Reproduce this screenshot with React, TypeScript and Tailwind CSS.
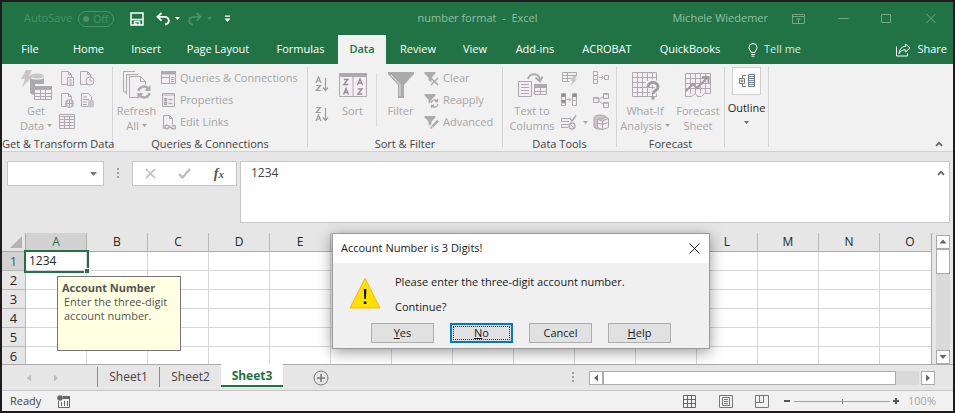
import type { ReactNode } from 'react'

const TABS = [
  { label: 'File', width: 'w-[56px]' },
  { label: 'Home', width: 'w-[61px]' },
  { label: 'Insert', width: 'w-[54px]' },
  { label: 'Page Layout', width: 'w-[90px]' },
  { label: 'Formulas', width: 'w-[75px]' },
  { label: 'Data', width: 'w-[48px]' },
  { label: 'Review', width: 'w-[64px]' },
  { label: 'View', width: 'w-[50px]' },
  { label: 'Add-ins', width: 'w-[70px]' },
  { label: 'ACROBAT', width: 'w-[74px]' },
  { label: 'QuickBooks', width: 'w-[92px]' },
]

const COLUMNS = 'ABCDEFGHIJKLMNO'.split('')
const ROWS = [1, 2, 3, 4, 5, 6]

export default function App() {
  return (
    <div className="relative flex flex-col h-screen overflow-hidden border-2 border-[#1f1a1e] bg-[#e6e6e6] font-['Open_Sans','Noto_Sans',sans-serif] text-[11px] text-[#444]">
      <TitleBar />
      <RibbonTabs />
      <Ribbon />
      <FormulaBar />
      <Sheet />
      <SheetTabs />
      <StatusBar />
      <AlertDialog />
    </div>
  )
}

function TitleBar() {
  return (
    <header className="grid grid-cols-[1fr_auto_1fr] items-center h-[33px] shrink-0 bg-[#217346] text-[#8fc0a3]">
      <div className="flex items-center pl-[22px]">
        <label htmlFor="autosave" className="w-[54px] text-[#4b916a]">
          AutoSave
        </label>
        <button
          id="autosave"
          className="flex items-center justify-between w-9 h-4 pl-1 pr-[5px] rounded-full border border-[#4b916a] text-[10px] leading-none text-[#4b916a]"
        >
          <span className="w-[6px] h-[6px] rounded-full bg-[#4b916a]" />
          Off
        </button>
        <button aria-label="Save" className="ml-4">
          <svg width="14" height="14" viewBox="0 0 14 14" fill="none" stroke="#fff" strokeWidth="1.5">
            <path d="M1 1h12v12H1zM4.500 13V9.500h5V13" />
            <path d="M1 7.500h12M6 11v2" />
          </svg>
        </button>
        <button aria-label="Undo" className="ml-3">
          <UndoIcon color="#fff" />
        </button>
        <Caret className="ml-[5px] text-white" />
        <button aria-label="Redo" className="ml-2 -scale-x-100">
          <UndoIcon color="#4b916a" />
        </button>
        <Caret className="ml-[5px] text-[#4b916a]" />
        <button aria-label="Customize Quick Access Toolbar" className="ml-3">
          <svg width="7" height="8" viewBox="0 0 7 8" fill="#fff">
            <path d="M1 0.500h5v1.200H1zM0.500 3.500h6L3.500 7z" />
          </svg>
        </button>
      </div>
      <h1 className="whitespace-pre">number format  -  Excel</h1>
      <div className="flex items-center justify-end pr-[17px]">
        <span className="mr-6">Michele Wiedemer</span>
        <button aria-label="Ribbon display options" className="mr-8">
          <svg width="14" height="12" viewBox="0 0 14 12" fill="none" stroke="#6fa988">
            <path d="M0.500 1.500h12v9h-12zM0.500 3.500h12M6.500 10V5.500M4.500 7l2-2 2 2" />
          </svg>
        </button>
        <button aria-label="Minimize" className="mr-8">
          <svg width="11" height="11" viewBox="0 0 11 11" stroke="#6fa988">
            <path d="M0.500 5.500h10" />
          </svg>
        </button>
        <button aria-label="Maximize" className="mr-[34px]">
          <svg width="11" height="11" viewBox="0 0 11 11" fill="none" stroke="#6fa988">
            <path d="M0.500 1.500h9v8h-9z" />
          </svg>
        </button>
        <button aria-label="Close">
          <svg width="10" height="11" viewBox="0 0 10 11" stroke="#6fa988">
            <path d="M0.500 1l9 9M9.500 1l-9 9" />
          </svg>
        </button>
      </div>
    </header>
  )
}

function UndoIcon({ color }: { color: string }) {
  return (
    <svg width="14" height="14" viewBox="0 0 14 14" fill="none" stroke={color} strokeWidth="1.8">
      <path d="M5.500 1L1.500 4.800l4 3.900M1.800 4.800H8c3.400 0 4.800 1.800 4.800 3.900 0 1.900-1.500 3.300-3.800 3.800" />
    </svg>
  )
}

function Caret({ className = '' }: { className?: string }) {
  return (
    <svg width="5" height="3" viewBox="0 0 5 3" className={className}>
      <path d="M0 0h5L2.500 3z" fill="currentColor" />
    </svg>
  )
}

function RibbonTabs() {
  return (
    <nav className="flex h-[29px] shrink-0 bg-[#217346] text-white">
      {TABS.map((tab) => (
        <button
          key={tab.label}
          className={`${tab.width} h-full whitespace-nowrap ${
            tab.label === 'Data' ? 'bg-[#f1f1f1] font-semibold text-[#217346]' : ''
          }`}
        >
          {tab.label}
        </button>
      ))}
      <button className="flex items-center gap-[6px] ml-3 text-[#d8eadf]">
        <svg width="10" height="14" viewBox="0 0 10 14" fill="none" stroke="#fff">
          <path d="M3 9.500C3 7.500 1 7 1 4.500a4 4 0 0 1 8 0C9 7 7 7.500 7 9.500zM3 11.500h4M3.500 13.200h3" />
        </svg>
        Tell me
      </button>
      <button className="flex items-center gap-[6px] ml-auto pr-[6px]">
        <svg width="15" height="14" viewBox="0 0 15 14" fill="none" stroke="#fff">
          <path d="M0.500 3.500v9.500h11V10" />
          <path d="M9.500 1l4.500 4-4.500 4V6.800C6.500 6.800 4.500 8 3 10.500 3.500 6 6 3.500 9.500 3.200z" />
        </svg>
        Share
      </button>
    </nav>
  )
}

function Group({ label, width, children }: { label: string; width: string; children: ReactNode }) {
  return (
    <section className={`${width} flex flex-col h-[80px] border-r border-[#d4d4d4]`}>
      <div className="flex h-[66px] text-[#a6a6a6]">{children}</div>
      <h2 className="mt-[3px] leading-4 text-center whitespace-nowrap">{label}</h2>
    </section>
  )
}

function BigButton({
  icon,
  lines,
  width,
  caret = false,
}: {
  icon: ReactNode
  lines: string[]
  width: string
  caret?: boolean
}) {
  return (
    <button className={`${width} flex flex-col items-center shrink-0 leading-[15px] whitespace-nowrap`}>
      <span className="flex items-center justify-center h-9">{icon}</span>
      {lines.map((line, i) => (
        <span key={line} className="flex items-center gap-[3px]">
          {line}
          {caret && i === lines.length - 1 && <Caret />}
        </span>
      ))}
    </button>
  )
}

function SmallButton({ icon, label }: { icon: ReactNode; label: string }) {
  return (
    <button className="flex items-center gap-1 h-[22px] whitespace-nowrap">
      {icon}
      {label}
    </button>
  )
}

function Icon({ w, h, children }: { w: number; h: number; children: ReactNode }) {
  return (
    <svg width={w} height={h} viewBox={`0 0 ${w} ${h}`} fill="#f4eef4" stroke="#adaaad" className="shrink-0">
      {children}
    </svg>
  )
}

function IconButton({ name, children }: { name: string; children: ReactNode }) {
  return (
    <button aria-label={name} className="flex items-center justify-center h-[22px]">
      {children}
    </button>
  )
}

function FunnelIcon({ children }: { children: ReactNode }) {
  return (
    <Icon w={15} h={15}>
      <path d="M0.500 1h11v1.500l-4 4V11l-3-1.500v-3l-4-4z" fill="#adaaad" stroke="none" />
      {children}
    </Icon>
  )
}

// letter strokes for the sort arrows and the Sort button, on a 5x6 box
const LETTER_A = 'M0 6L2.500 0L5 6M1 4h3'
const LETTER_Z = 'M0.300 0.500H4.500L0.300 5.500H4.800'

function SortArrow({ descending = false }: { descending?: boolean }) {
  return (
    <svg width="14" height="17" viewBox="0 0 14 17" fill="none" stroke="#9a9a9a" strokeWidth="1.200">
      <path d={descending ? LETTER_Z : LETTER_A} transform="translate(1 1)" />
      <path d={descending ? LETTER_A : LETTER_Z} transform="translate(1 9)" />
      <path d="M10.500 2v12M8 11.500l2.500 3 2.500-3" />
    </svg>
  )
}

function Ribbon() {
  return (
    <div className="flex items-start h-[88px] shrink-0 pt-[3px] border-b border-[#d0d0d0] bg-[#f1f1f1]">
      <Group label="Get & Transform Data" width="w-[111px]">
        <BigButton
          width="w-[44px] ml-3"
          lines={['Get', 'Data']}
          caret
          icon={
            <Icon w={32} h={32}>
              <path d="M6 1h6L9 7h4L2 18l3-8H1z" fill="#c9c5c9" stroke="none" />
              <ellipse cx="17" cy="7" rx="7" ry="2.500" fill="#c9c5c9" stroke="none" />
              <path d="M10 9c3 2 11 2 14 0v6H15v11c-2 0-5-1-5-3z" fill="#adaaad" stroke="none" />
              <path d="M14.500 17.500h17v13h-17z" />
              <path d="M14 17h18v4H14z" fill="#adaaad" stroke="none" />
              <path d="M14.500 24.500h17M14.500 27.500h17M20.500 21v10M25.500 21v10" />
            </Icon>
          }
        />
        <div className="grid grid-cols-[18px_22px] h-[66px]">
          <IconButton name="From Text/CSV">
            <Icon w={14} h={15}>
              <path d="M1.500 0.500h7l3 3v10h-10zM8.500 0.500v3h3" />
              <path d="M7.500 6.500h6v8h-6zM9 9h3M9 11h3M9 13h3" />
            </Icon>
          </IconButton>
          <IconButton name="Recent Sources">
            <Icon w={16} h={15}>
              <path d="M1.500 0.500h7l3 3v10h-10zM8.500 0.500v3h3" />
              <circle cx="11" cy="10" r="4" />
              <path d="M11 7.500V10h2.500" />
            </Icon>
          </IconButton>
          <IconButton name="From Web">
            <Icon w={14} h={15}>
              <path d="M1.500 0.500h7l3 3v10h-10zM8.500 0.500v3h3" />
              <circle cx="9.500" cy="10.500" r="4" />
              <path d="M5.500 10.500h8M9.500 6.500v8M7.500 7.500c-1 2-1 4 0 6M11.500 7.500c1 2 1 4 0 6" />
            </Icon>
          </IconButton>
          <IconButton name="Existing Connections">
            <Icon w={14} h={15}>
              <path d="M1.500 0.500h7l3 3v10h-10zM3 4h4M3 6.500h6M3 9h4M3 11.500h4" />
              <path d="M8 8c0-1.500 6-1.500 6 0v5.500c0 1.500-6 1.500-6 0z" fill="#c9c5c9" stroke="none" />
            </Icon>
          </IconButton>
          <IconButton name="From Table/Range">
            <Icon w={16} h={16}>
              <path d="M0.500 0.500h15v14h-15z" />
              <path d="M0.500 2.500h15M0.500 5.500h15M0.500 8.500h15M0.500 11.500h15M5.500 2v12M10.500 2v12" />
            </Icon>
          </IconButton>
        </div>
      </Group>

      <Group label="Queries & Connections" width="w-[195px]">
        <BigButton
          width="w-[47px]"
          lines={['Refresh', 'All']}
          caret
          icon={
            <Icon w={30} h={30}>
              <path d="M1.500 22V1.500H13M4.500 24.500V4.500H16M1.500 22h3" fill="none" />
              <path d="M7.500 6.500h11l5 5v16h-16zM18.500 6.500v5h5" />
              <circle cx="22" cy="22" r="7.500" fill="#f1f1f1" stroke="none" />
              <path d="M16.500 21a5.500 5.500 0 0 1 10-2M27.500 23a5.500 5.500 0 0 1-10 2" fill="none" strokeWidth="2.500" />
              <path d="M28.500 15v6h-6zM15.500 29v-6h6z" fill="#adaaad" stroke="none" />
            </Icon>
          }
        />
        <div className="ml-px">
          <SmallButton
            label="Queries & Connections"
            icon={
              <Icon w={15} h={14}>
                <path d="M0.500 0.500h14v12h-14z" />
                <path d="M0 0h15v3.500H0z" fill="#adaaad" stroke="none" />
                <path d="M8.500 4v9M10 6.500h3M10 8.500h3M10 10.500h3M0.500 6.500h8" />
              </Icon>
            }
          />
          <SmallButton
            label="Properties"
            icon={
              <Icon w={15} h={15}>
                <path d="M1.500 0.500h12v13h-12zM1.500 2h12" />
                <path d="M3.500 5.500h2v2h-2zM3.500 9.500h2v2h-2zM7.500 6.500h4M7.500 10.500h4" strokeWidth="1.300" />
              </Icon>
            }
          />
          <SmallButton
            label="Edit Links"
            icon={
              <Icon w={15} h={15}>
                <path d="M3.500 13.500h-1v-13h6l3 3v6M8.500 0.500v3h3" />
                <path d="M8 12.500c-1.500 2-4 1.500-4-.5s2.500-2.500 4-.5l2.500 1.500c1.500 1.500 4 1 4-.8s-2.500-2.200-3.500-.7" fill="none" strokeWidth="1.500" />
              </Icon>
            }
          />
        </div>
      </Group>

      <Group label="Sort & Filter" width="w-[195px]">
        <div className="flex flex-col gap-[13px] w-[30px] pl-[7px] pt-[9px]">
          <button aria-label="Sort A to Z">
            <SortArrow />
          </button>
          <button aria-label="Sort Z to A">
            <SortArrow descending />
          </button>
        </div>
        <BigButton
          width="w-[29px]"
          lines={['Sort']}
          icon={
            <Icon w={28} h={25}>
              <path d="M0.500 0.500h27v23h-27zM14 1v23" />
              <path d="M0 0h28v4H0z" fill="#adaaad" stroke="none" />
              <g fill="none" stroke="#918e91" strokeWidth="1.300">
                <path d={LETTER_Z} transform="translate(4.500 6)" />
                <path d={LETTER_A} transform="translate(4.500 15.500)" />
                <path d={LETTER_A} transform="translate(18.500 6)" />
                <path d={LETTER_Z} transform="translate(18.500 15.500)" />
              </g>
            </Icon>
          }
        />
        <span className="h-[54px] mt-[6px] ml-[9px] border-l border-[#dcdcdc]" />
        <BigButton
          width="w-[47px]"
          lines={['Filter']}
          icon={
            <Icon w={28} h={28}>
              <path d="M1 1h26v2L17 14v13h-6V14L1 3z" fill="#adaaad" stroke="none" />
              <path d="M4 4l9 9.500V25" fill="none" stroke="#e4e0e4" />
            </Icon>
          }
        />
        <div>
          <SmallButton
            label="Clear"
            icon={
              <FunnelIcon>
                <path d="M7 7l7 7M14 7l-7 7" strokeWidth="1.500" />
              </FunnelIcon>
            }
          />
          <SmallButton
            label="Reapply"
            icon={
              <FunnelIcon>
                <circle cx="10.500" cy="10.500" r="4.500" fill="#f1f1f1" stroke="none" />
                <path d="M7 10a3.500 3.500 0 0 1 6-2M14 11a3.500 3.500 0 0 1-6 2M13.500 6v2.500H11M7.500 15v-2.500H10" fill="none" strokeWidth="1.300" />
              </FunnelIcon>
            }
          />
          <SmallButton
            label="Advanced"
            icon={
              <FunnelIcon>
                <path d="M14 5.500L8 12" stroke="#f1f1f1" strokeWidth="5" />
                <path d="M14 5.500L8.500 11.500" strokeWidth="2.500" />
                <path d="M7 11l2 2-3 1z" fill="#adaaad" stroke="none" />
              </FunnelIcon>
            }
          />
        </div>
      </Group>

      <Group label="Data Tools" width="w-[114px]">
        <BigButton
          width="w-[58px]"
          lines={['Text to', 'Columns']}
          icon={
            <Icon w={30} h={26}>
              <path d="M1.500 9.500h13v15h-13zM4 12.500h8M4 15.500h8M4 18.500h8M4 21.500h8" />
              <path d="M17.500 12.500h12v10h-12z" />
              <path d="M17 12h13v4H17z" fill="#adaaad" stroke="none" />
              <path d="M18 19.500h11M23.500 16v6" />
              <path d="M11 7c1-6 11-7 12 1" fill="none" strokeWidth="1.800" />
              <path d="M18.500 5.500l4.500 4 2.500-5" fill="none" strokeWidth="1.800" />
            </Icon>
          }
        />
        <div className="grid grid-cols-[16px_16px_16px] h-[66px]">
          <IconButton name="Flash Fill">
            <Icon w={15} h={15}>
              <path d="M0.500 1.500h14M0.500 4.500h14M0.500 7.500h10M0.500 10.500h7M0.500 1.500v9M5.500 1.500v9M14.500 1.500v3" fill="none" />
              <path d="M11 5h4l-2 3h2l-6 7 1.500-5H9z" fill="#c9c5c9" stroke="none" />
            </Icon>
          </IconButton>
          <span />
          <IconButton name="Consolidate">
            <Icon w={16} h={14}>
              <path d="M0.500 0.500h4v12h-4zM0.500 4.500h4M0.500 8.500h4M11.500 4.500h4v4h-4z" />
              <path d="M6 6.500h4M8.500 4.500l2 2-2 2" fill="none" />
            </Icon>
          </IconButton>
          <IconButton name="Remove Duplicates">
            <Icon w={16} h={14}>
              <path d="M0.500 0.500h4v12h-4zM11.500 0.500h4v12h-4z" />
              <path d="M0.500 1h4v3h-4zM0.500 7h4v3h-4zM11.500 1h4v3h-4z" fill="#918e91" stroke="none" />
              <path d="M5.500 6.500h4M8 4.500l2 2-2 2M0.500 10h4M11.500 7.500h4" fill="none" />
            </Icon>
          </IconButton>
          <span />
          <IconButton name="Relationships">
            <Icon w={16} h={16}>
              <path d="M5 8l6-4M5 8l6 5" />
              <path d="M0.500 5.500h5v5h-5zM10.500 1.500h5v5h-5zM10.500 10.500h5v5h-5z" />
              <path d="M0.500 6h5M10.500 2h5M10.500 11h5" strokeWidth="1.500" />
            </Icon>
          </IconButton>
          <IconButton name="Data Validation">
            <Icon w={16} h={15}>
              <path d="M8 3.500H0.500v3H8M7 9.500H0.500v3H7" />
              <path d="M8.500 3l2.500 3 4-5.500" fill="none" strokeWidth="1.500" />
              <circle cx="11" cy="11" r="3" strokeWidth="1.300" />
              <path d="M9 9l4 4" />
            </Icon>
          </IconButton>
          <span className="flex items-center justify-center">
            <Caret />
          </span>
          <IconButton name="Manage Data Model">
            <Icon w={16} h={16}>
              <path d="M1 4c0-4 12-4 13 0v9c-2 3-11 3-13 0z" fill="#c9c5c9" />
              <path d="M4.500 5.500l9-2 2 1v9l-6 2-5-2zM9.500 7v8M4.500 9l5 1.500 6-2M4.500 5.500l5 1.500 6-2.500" />
            </Icon>
          </IconButton>
        </div>
      </Group>

      <Group label="Forecast" width="w-[108px]">
        <BigButton
          width="w-[56px]"
          lines={['What-If', 'Analysis']}
          caret
          icon={
            <Icon w={29} h={30}>
              <path d="M1.500 2.500h24v24h-24zM6.500 2.500v24M11.500 2.500v24M16.500 2.500v24M21.500 2.500v24M1.500 7.500h24M1.500 12.500h24M1.500 17.500h24M1.500 22.500h24" />
              <path d="M16 17c0-6 11-6 11 0 0 4-5 3-5 7" fill="none" stroke="#f1f1f1" strokeWidth="6" />
              <path d="M17 17c0-6 10-6 10 0 0 4-5 3-5 7M22 26.500v3" fill="none" stroke="#a09da0" strokeWidth="3" />
            </Icon>
          }
        />
        <BigButton
          width="w-[50px]"
          lines={['Forecast', 'Sheet']}
          icon={
            <Icon w={28} h={26}>
              <path d="M1.500 1.500h25v20h-6l-3 3h-4l-2-3-4 3h-6zM6.500 1.500v20M11.500 1.500v20M16.500 1.500v20M21.500 1.500v20M1.500 6.500h25M1.500 11.500h25M1.500 16.500h25" />
              <path d="M2 19l7-7 4 4L24 5M18 5h6.500v6" fill="none" stroke="#a09da0" strokeWidth="2" />
            </Icon>
          }
        />
      </Group>

      <section className="w-[44px] h-[80px] border-r border-[#d4d4d4]">
        <button className="flex flex-col items-center w-full text-[#262626]">
          <span className="flex items-center justify-center w-[29px] h-7 border border-[#cfcfcf] bg-[#fbfbfb]">
            <svg width="16" height="14" viewBox="0 0 16 14" fill="none" stroke="#777">
              <path d="M7 1.500H3.500V4M3.500 10v2.500H7M0.500 4.500h5v5h-5zM1.500 7h3M3 5.500v3" />
              <path d="M9.500 0.500h6v12h-6zM9.500 4.500h6M9.500 8.500h6" />
              <path d="M10 2.500h5M10 6.500h5M10 10.500h5" stroke="#5b9bd5" />
            </svg>
          </span>
          <span className="mt-[5px] leading-[15px]">Outline</span>
          <Caret className="mt-[6px] text-[#666]" />
        </button>
      </section>

      <button aria-label="Collapse the Ribbon" className="self-end ml-auto mb-1 mr-[10px]">
        <ChevronUp />
      </button>
    </div>
  )
}

function ChevronUp() {
  return (
    <svg width="8" height="6" viewBox="0 0 8 6" fill="none" stroke="#666" strokeWidth="1.800">
      <path d="M1 4.800L4 1.800l3 3" />
    </svg>
  )
}

function Dots() {
  return (
    <svg width="2" height="11" viewBox="0 0 2 11" fill="#a0a0a0" className="shrink-0">
      <path d="M0 0h2v2H0zM0 4h2v2H0zM0 8h2v2H0z" />
    </svg>
  )
}

function FormulaBar() {
  return (
    <div className="flex h-[81px] shrink-0 pl-[5px] pr-[3px] pt-[9px] pb-[9px]">
      <div className="flex items-center w-[97px] h-[25px] pr-[6px] border border-[#c6c6c6] bg-white">
        <input aria-label="Name Box" className="flex-1 min-w-0 px-1 outline-none" />
        <button aria-label="Open name list">
          <svg width="7" height="4" viewBox="0 0 7 4" fill="#777">
            <path d="M0 0h7L3.500 4z" />
          </svg>
        </button>
      </div>
      <div className="flex items-center justify-center w-7 h-[25px]">
        <Dots />
      </div>
      <div className="flex items-center justify-between w-[105px] h-[25px] px-3 border border-[#c6c6c6] bg-white">
        <button aria-label="Cancel entry">
          <svg width="11" height="11" viewBox="0 0 11 11" stroke="#bbb" strokeWidth="1.600">
            <path d="M1 1l9 9M10 1l-9 9" />
          </svg>
        </button>
        <button aria-label="Enter">
          <svg width="13" height="11" viewBox="0 0 13 11" fill="none" stroke="#bbb" strokeWidth="2.200">
            <path d="M1 6l3.500 3.500L12 1" />
          </svg>
        </button>
        <button aria-label="Insert Function" className="font-['Liberation_Serif',serif] text-[14px] leading-none font-bold italic text-[#555]">
          f<span className="text-[11px]">x</span>
        </button>
      </div>
      <div className="flex flex-1 items-start h-[62px] ml-[3px] pr-1 border border-[#c6c6c6] bg-white">
        <textarea
          aria-label="Formula Bar"
          defaultValue="1234"
          className="flex-1 h-full px-[10px] pt-[3px] leading-4 text-[12px] text-[#444] resize-none outline-none"
        />
        <button aria-label="Collapse Formula Bar" className="mt-2">
          <ChevronUp />
        </button>
      </div>
    </div>
  )
}

function Sheet() {
  return (
    <div className="flex flex-1 min-h-0">
      <div className="relative flex-1 min-w-0">
        <div className="h-full overflow-hidden border-r border-[#ababab]">
          <table className="table-fixed w-[939px] border-separate border-spacing-0 text-[13px] leading-[18px] text-[#262626]">
            <thead>
              <tr className="h-[19px]">
                <th className="w-6 p-0 border-r border-b border-[#ababab]">
                  <svg width="12" height="12" viewBox="0 0 12 12" className="ml-auto mr-[3px]">
                    <path d="M12 0v12H0z" fill="#b4b4b4" />
                  </svg>
                </th>
                {COLUMNS.map((col) => (
                  <th
                    key={col}
                    className={`w-[61px] p-0 border-r border-b font-normal text-[12px] ${
                      col === 'A'
                        ? 'border-r-[#b0b0b0] border-b-[#217346] bg-[#d2d2d2] text-[#217346]'
                        : 'border-r-[#b8b8b8] border-b-[#ababab]'
                    }`}
                  >
                    {col}
                  </th>
                ))}
              </tr>
            </thead>
            <tbody>
              {ROWS.map((row) => (
                <tr key={row} className="h-[19px]">
                  <th
                    className={`p-0 border-r border-b border-[#b8b8b8] font-normal ${
                      row === 1 ? 'bg-[#d2d2d2] text-[#217346]' : ''
                    }`}
                  >
                    {row}
                  </th>
                  {COLUMNS.map((col) => {
                    const selected = row === 1 && col === 'A'
                    return (
                      <td
                        key={col}
                        className={`p-0 border-r border-b border-[#d6d6d6] bg-white ${
                          selected ? 'relative pl-[3px] text-[12px] outline-2 outline-[#217346]' : ''
                        }`}
                      >
                        {selected && '1234'}
                        {selected && (
                          <span className="absolute -right-[3px] -bottom-[3px] w-[5px] h-[5px] border-t border-l border-white bg-[#217346]" />
                        )}
                      </td>
                    )
                  })}
                </tr>
              ))}
            </tbody>
          </table>
        </div>
        {/* input message of the selected cell */}
        <div className="absolute left-[55px] top-[43px] w-[124px] h-[75px] pl-1 pt-1 border border-[#767676] bg-[#ffffe1] text-[#555]">
          <p className="leading-[14px] font-bold">Account Number</p>
          <p className="pl-[2px] leading-[14px]">
            Enter the three-digit
            <br />
            account number.
          </p>
        </div>
      </div>
      <div className="flex flex-col w-[14px] ml-1 mr-[3px] mt-[2px] bg-[#dadada]">
        <ScrollButton name="Scroll up" path="M0.500 5.500h7L4 1.500z" />
        <div className="h-[25px] border border-[#ababab] bg-white" />
        <span className="flex-1" />
        <ScrollButton name="Scroll down" path="M0.500 2h7L4 6z" />
      </div>
    </div>
  )
}

function ScrollButton({ name, path }: { name: string; path: string }) {
  return (
    <button
      aria-label={name}
      className="flex items-center justify-center shrink-0 w-[14px] h-[14px] border border-[#ababab] bg-white"
    >
      <svg width="8" height="8" viewBox="0 0 8 8" fill="#666" className="shrink-0">
        <path d={path} />
      </svg>
    </button>
  )
}

function SheetTabs() {
  return (
    <div className="flex h-[26px] shrink-0 border-t border-[#ababab] text-[12px]">
      <div className="flex items-center w-[95px] pl-6 gap-[21px]">
        <button aria-label="Previous sheet">
          <svg width="6" height="8" viewBox="0 0 6 8" fill="#bdbdbd">
            <path d="M5 0.500v7L1 4z" />
          </svg>
        </button>
        <button aria-label="Next sheet">
          <svg width="6" height="8" viewBox="0 0 6 8" fill="#bdbdbd">
            <path d="M1 0.500v7L5 4z" />
          </svg>
        </button>
      </div>
      <button className="self-start w-[62px] h-5 mt-[2px] border-l border-[#8a8a8a]">Sheet1</button>
      <button className="self-start w-[62px] h-5 mt-[2px] border-l border-[#8a8a8a]">Sheet2</button>
      <button className="w-[62px] h-[23px] -mt-px pt-[3px] border-b-2 border-[#217346] bg-white font-bold text-[#217346]">
        Sheet3
      </button>
      <button aria-label="New sheet" className="ml-[30px]">
        <svg width="16" height="16" viewBox="0 0 16 16" fill="none" stroke="#777">
          <circle cx="8" cy="8" r="7" />
          <path d="M4 8h8M8 4v8" strokeWidth="1.500" />
        </svg>
      </button>
      <div className="flex items-center ml-auto mr-[18px]">
        <Dots />
        <div className="flex w-[346px] h-[14px] ml-[15px]">
          <ScrollButton name="Scroll left" path="M6 0.500v7L2 4z" />
          <div className="w-[293px] border border-[#ababab] bg-white" />
          <span className="flex-1 mr-[2px] bg-[#dadada]" />
          <ScrollButton name="Scroll right" path="M2 0.500v7L6 4z" />
        </div>
      </div>
    </div>
  )
}

function StatusBar() {
  return (
    <footer className="flex items-center h-[21px] shrink-0 pl-2 pr-[17px] border-t border-[#c6c6c6] bg-[#f1f1f1]">
      <span className="w-[47px]">Ready</span>
      <button aria-label="Record macro">
        <svg width="13" height="13" viewBox="0 0 13 13" fill="#666">
          <circle cx="3" cy="3" r="2.800" />
          <path d="M6 1h7v3H6z" />
          <path d="M1.500 6v6.500h11V3M4.500 7v4M7.500 6v5M10.500 6v5" fill="none" stroke="#666" />
        </svg>
      </button>
      <div className="flex items-center ml-auto">
        <button aria-label="Normal" className="mr-[23px]">
          <svg width="13" height="13" viewBox="0 0 13 13" fill="none" stroke="#666">
            <path d="M0.500 0.500h12v12h-12zM4.500 0.500v12M8.500 0.500v12M0.500 4.500h12M0.500 8.500h12" />
          </svg>
        </button>
        <button aria-label="Page Layout" className="mr-[22px]">
          <svg width="14" height="13" viewBox="0 0 14 13" fill="none" stroke="#777">
            <path d="M0.500 0.500h13v12h-13zM3.500 2.500h7v8h-7zM5 4.500h4M5 6.500h4M5 8.500h4" />
          </svg>
        </button>
        <button aria-label="Page Break Preview" className="mr-[15px]">
          <svg width="14" height="13" viewBox="0 0 14 13" fill="none" stroke="#777">
            <path d="M0.500 0.500h13v12h-13zM4.500 1v6.500M8.500 1v6.500M0.500 7.500h8" />
          </svg>
        </button>
        <button aria-label="Zoom out" className="mr-1">
          <svg width="6" height="8" viewBox="0 0 6 8" stroke="#555" strokeWidth="2">
            <path d="M0 4h6" />
          </svg>
        </button>
        <input
          type="range"
          aria-label="Zoom"
          defaultValue={50}
          className="w-24 h-2 appearance-none bg-transparent [&::-webkit-slider-runnable-track]:h-px [&::-webkit-slider-runnable-track]:bg-[#a0a0a0] [&::-webkit-slider-thumb]:appearance-none [&::-webkit-slider-thumb]:w-px [&::-webkit-slider-thumb]:h-[5px] [&::-webkit-slider-thumb]:-mt-[2px] [&::-webkit-slider-thumb]:bg-[#808080]"
        />
        <button aria-label="Zoom in" className="ml-[2px]">
          <svg width="8" height="8" viewBox="0 0 8 8" stroke="#555" strokeWidth="2">
            <path d="M1 4h6M4 1v6" />
          </svg>
        </button>
        <button className="w-9 text-right text-[#a6a6a6]">100%</button>
      </div>
    </footer>
  )
}

function AlertDialog() {
  return (
    <div
      role="alertdialog"
      aria-labelledby="alert-title"
      className="absolute left-[330px] top-[231px] w-[378px] border border-[#999] bg-[#f0f0f0] text-[#1a1a1a] shadow-[0_3px_14px_rgba(0,0,0,0.4)]"
    >
      <div className="flex items-center justify-between h-[29px] pl-2 pr-[9px] bg-white">
        <h2 id="alert-title">Account Number is 3 Digits!</h2>
        <button aria-label="Close">
          <svg width="11" height="11" viewBox="0 0 11 11" stroke="#222">
            <path d="M0.500 0.500l10 10M10.500 0.500l-10 10" />
          </svg>
        </button>
      </div>
      <div className="flex gap-[14px] pl-4 pt-[6px] h-[60px]">
        <svg width="32" height="32" viewBox="0 0 32 32" className="mt-2">
          <path d="M16 1.500L31 31H1z" fill="#ffe100" stroke="#f9b21d" strokeLinejoin="round" />
          <path d="M14.800 12h2.600l-.5 10h-1.600zM14.800 24.500h2.600V27h-2.600z" fill="#111" />
        </svg>
        <div className="leading-[25px]">
          <p>Please enter the three-digit account number.</p>
          <p>Continue?</p>
        </div>
      </div>
      <div className="flex gap-4 pl-[38px] pb-[5px]">
        <DialogButton accessKey="Y" rest="es" />
        <button
          accessKey="n"
          className="w-[63px] h-5 p-px border-2 border-[#0078d7] bg-[#e1e1e1] leading-[14px]"
        >
          <span className="block border border-dotted border-[#333] leading-3">
            <u>N</u>o
          </span>
        </button>
        <DialogButton rest="Cancel" />
        <DialogButton accessKey="H" rest="elp" />
      </div>
    </div>
  )
}

function DialogButton({ accessKey, rest }: { accessKey?: string; rest: string }) {
  return (
    <button accessKey={accessKey} className="w-[63px] h-5 border border-[#adadad] bg-[#e1e1e1] leading-[18px]">
      {accessKey && <u>{accessKey}</u>}
      {rest}
    </button>
  )
}
